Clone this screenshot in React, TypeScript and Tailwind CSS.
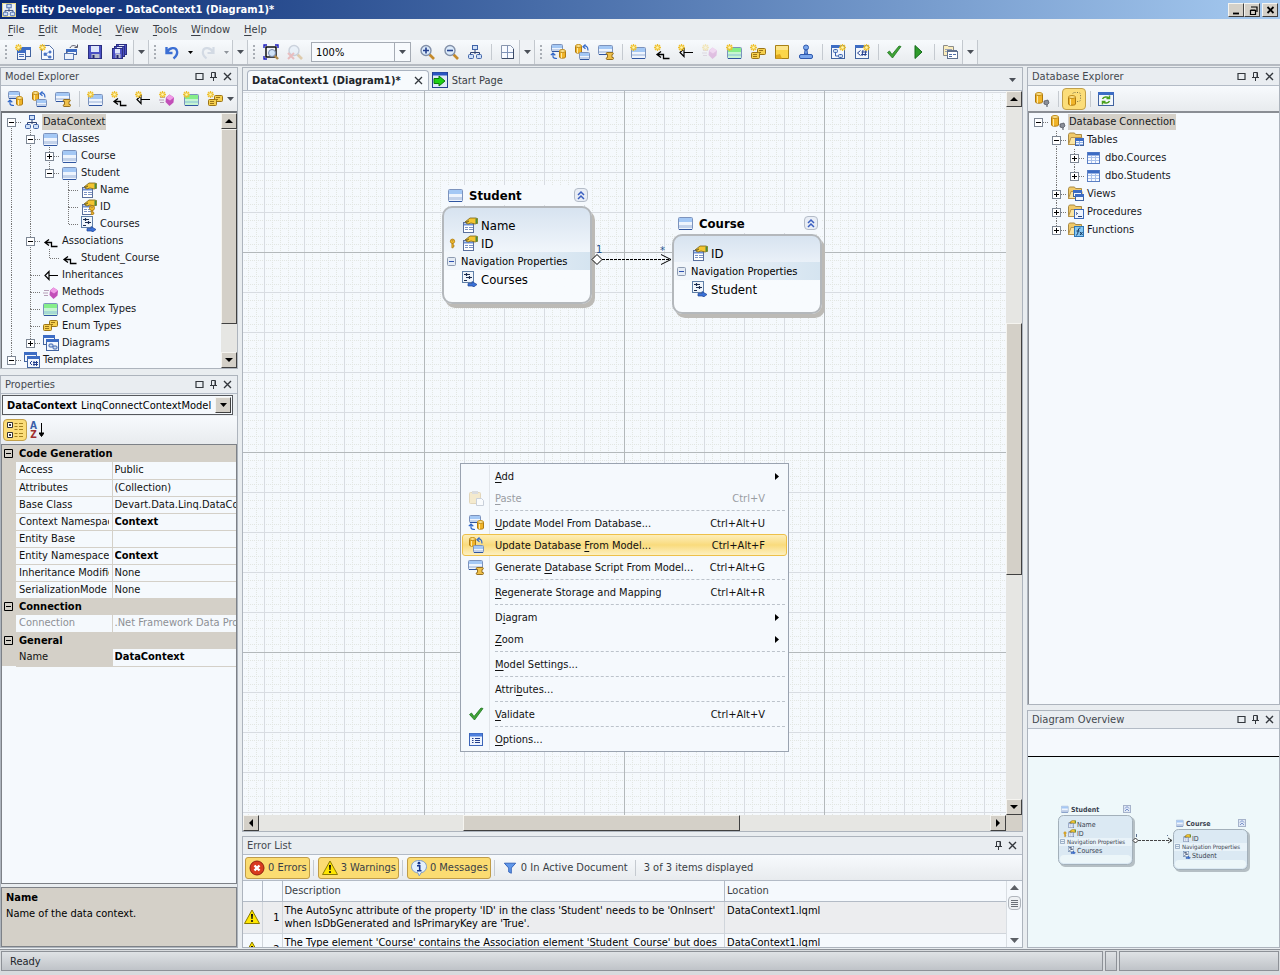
import React, { useState } from 'react';

const NAVY = '#24408e';

// ---------- icon parts ----------
const Tbl = ({ x, y, w, h, green }: { x: number; y: number; w: number; h: number; green?: boolean }) => (
  <g>
    <rect x={x + 0.5} y={y + 0.5} width={w - 1} height={h - 1} rx="1" fill={green ? '#c6f5d2' : '#eef4fd'} stroke="#7c93bd" />
    <rect x={x + 1} y={y + 1} width={w - 2} height={Math.round(h * 0.32)} fill={green ? '#86ee8a' : '#a4c8f5'} />
    <rect x={x + 1} y={y + Math.round(h * 0.6)} width={w - 2} height={Math.round(h * 0.2)} fill={green ? '#a5d9d4' : '#c3d2ea'} />
    <path d={`M${x + 1} ${y + h - 0.5}h${w - 2}`} stroke="#2f55a0" />
  </g>
);

const Db = ({ x, y, w = 7, h = 10 }: { x: number; y: number; w?: number; h?: number }) => (
  <g>
    <path
      d={`M${x + 0.5} ${y + 2}v${h - 4}c0 1.6 ${w - 1} 1.6 ${w - 1} 0v-${h - 4}`}
      fill="#f0b429"
      stroke="#b07a10"
    />
    <ellipse cx={x + w / 2} cy={y + 2} rx={w / 2 - 0.5} ry="1.5" fill="#fbe08a" stroke="#c28c17" />
    <path d={`M${x + 2.5} ${y + 4}v${h - 5}`} stroke="#fce9a6" />
  </g>
);

const Star = ({ x = 0, y = 0 }: { x?: number; y?: number }) => (
  <g fill="none">
    <path d={`M${x + 3.5} ${y}v7M${x} ${y + 3.5}h7M${x + 1} ${y + 1}l5 5M${x + 6} ${y + 1}l-5 5`} strokeWidth="1.3" stroke="#efc02c" />
    <circle cx={x + 3.5} cy={y + 3.5} r="1.3" fill="#fff6b0" />
  </g>
);

const Win = ({ x, y, w, h }: { x: number; y: number; w: number; h: number }) => (
  <g>
    <rect x={x + 0.5} y={y + 0.5} width={w - 1} height={h - 1} fill="#f3f7fd" stroke="#41639f" />
    <rect x={x} y={y} width={w} height="3" fill="#3c6cc4" />
  </g>
);

const Hand = (
  <g>
    <rect x="1.5" y="5.5" width="10" height="10" fill="#fff" stroke="#5a6f9c" />
    <path d="M2 7.5h9" stroke="#6a8fd8" strokeWidth="2" />
    <path d="M3 10.5h3M7 10.5h4M3 12.5h3M7 12.5h4" stroke="#7b93c4" />
    <path d="M3 5l5-4h6l2 1v4l-3 1-4-1-3 1-2-1 3-2z" fill="#f4c430" stroke="#7a6414" strokeWidth=".8" />
    <path d="M13.5 1.5h2v5h-2z" fill="#4d8b3c" />
  </g>
);

const Key = ({ x, y }: { x: number; y: number }) => (
  <g fill="#f5c02f" stroke="#a8730c" strokeWidth=".8">
    <circle cx={x + 3} cy={y + 3} r="2.5" />
    <path d={`M${x + 2.3} ${y + 5.5}v5h1.5v-1.5h1v-1.4h-1v-2z`} />
    <circle cx={x + 3} cy={y + 2.4} r=".6" fill="#fff" />
  </g>
);

const Lens = (
  <g>
    <path d="M10.5 10.5l4.5 4.5" stroke="#c58a2b" strokeWidth="2.6" />
    <circle cx="7" cy="6.5" r="5" fill="#dcebfb" stroke="#8290a8" strokeWidth="1.4" />
  </g>
);

const Folder = (
  <g>
    <path d="M.5 2.5l1-1.5h5l1 1.5h6v10H.5z" fill="#f0c969" stroke="#a98a45" />
    <path d="M.5 12.5l2.5-7h11v7z" fill="#fbe5a3" stroke="#b8934b" />
  </g>
);

const Tree = (
  <g>
    <path d="M8 6v4M3.500 11V8.500h9V11" fill="none" stroke="#2d4170" />
    <rect x="5.500" y="1.500" width="5" height="4" fill="#cfe0f8" stroke="#3f63a8" />
    <rect x="1.500" y="10.500" width="5" height="4" rx="1" fill="#cfe0f8" stroke="#3f63a8" />
    <rect x="9.500" y="10.500" width="5" height="4" rx="1" fill="#cfe0f8" stroke="#3f63a8" />
  </g>
);

const Enum = (
  <g fill="#f5cf4e" stroke="#9b7416">
    <rect x="7.500" y="4.500" width="8" height="6" rx="1" />
    <rect x="1.500" y="8.500" width="8" height="6" rx="1" />
    <path d="M9 6.500h4M9 8.500h2M3 10.500h4M3 12.500h4" />
  </g>
);

const Assoc = <path d="M2 9.500h6.500v4h6M6 6.500l-4 3 4 3" fill="none" stroke="#000" strokeWidth="1.3" />;
const Inherit = <path d="M6 8.500h9M6 4.500v8L2 8.500z" fill="none" stroke="#000" strokeWidth="1.2" />;
const Method = (
  <g>
    <path d="M1 6.500h5M0 9h5M1 11.500h4" stroke="#b79fb8" />
    <path d="M10.500 3.500l4.500 3-.5 5-4 3.500-4-4 .5-4.500z" fill="#c24fb8" />
    <path d="M10.500 3.500l4.500 3-4 3-4-2.500z" fill="#f09be6" />
  </g>
);

const Floppy = ({ x, y, s }: { x: number; y: number; s: number }) => (
  <g>
    <rect x={x + 0.5} y={y + 0.5} width={s - 1} height={s - 1} fill="#4a50c4" stroke="#2b2f80" />
    <rect x={x + 3} y={y + 1} width={s - 6} height={s / 2 - 1} fill="#dfe6fa" />
    <rect x={x + 3.5} y={y + s - 5} width={s - 6} height="4" fill="#b9bccb" />
    <rect x={x + 4.5} y={y + s - 4} width="2" height="3" fill="#23276f" />
  </g>
);

const Warning = (
  <g>
    <path d="M8 1L15.500 14.500H.500z" fill="#ffe600" stroke="#8a7a00" />
    <path d="M7 5h2l-.4 5H7.400z" fill="#111" />
    <circle cx="8" cy="12" r="1.100" fill="#111" />
  </g>
);

const Scroll = (
  <g fill="#efc04a" stroke="#8c6414" strokeWidth=".9">
    <path d="M9 8.500h5.500c1 0 1 2 0 2H14v3h1c1 0 .7 2-.4 2H9c-1 0-1-2 0-2h.5v-3H9c-1 0-1-2 0-2z" />
  </g>
);

const glyphs: Record<string, React.ReactNode> = {
  app: (
    <g>
      <rect x=".5" y=".5" width="15" height="15" fill="#e9f0fb" stroke="#f1dd82" />
      {Tree}
    </g>
  ),
  newProject: (<g><Win x={4} y={3} w={12} h={10} /><Win x={2} y={6} w={9} h={10} /><path d="M4 10.500h5M4 12.500h5" stroke="#4e72b8" /><Star /></g>),
  newFile: (<g><path d="M2.500 1.500h8l4 4v10h-12z" fill="#f8fbff" stroke="#5672a8" /><path d="M5 9h2.500v2.500H5zM10 7h2v2h-2zM9.500 12h2.500v2H9.500zM7.500 10l2-2M7.500 11l2 2" fill="#4a76c6" stroke="#4a76c6" strokeWidth=".7" /><Star /></g>),
  open: (<g><Win x={3} y={5} w={11} h={6} /><rect x="1.500" y="9.500" width="9" height="6" fill="#eef3fb" stroke="#5b7ab4" /><path d="M4 9V7.500M7 4c1-3 5-3 7-1M14.500.5v3h-3" fill="none" stroke="#556" /></g>),
  save: <Floppy x={1} y={1} s={14} />,
  saveAll: (<g><Floppy x={5} y={0} s={11} /><Floppy x={3} y={2} s={11} /><Floppy x={1} y={4} s={11} /></g>),
  undo: <path d="M2.500 3v6h6M3 8.500c2-5 9-6 10-1.500.8 3-1 5.500-3.500 7.500" fill="none" stroke="#3c6fd4" strokeWidth="2.400" />,
  redo: <path d="M13.500 3v6h-6M13 8.500c-2-5-9-6-10-1.500-.8 3 1 5.500 3.500 7.500" fill="none" stroke="#d3dae4" strokeWidth="2.200" />,
  zoomFit: (<g><path d="M1 4V1h3M12 1h3v3M1 12v3h3" fill="none" stroke="#1d1dc0" strokeWidth="1.400" /><rect x="3" y="3" width="10" height="10" fill="none" stroke="#000" strokeWidth="1.400" /><path d="M11 11l4 4" stroke="#b08a4a" strokeWidth="2.400" /><circle cx="9" cy="9" r="3.500" fill="#cfe3f7" stroke="#7a8db0" /></g>),
  zoomOff: (<g opacity=".35">{Lens}<path d="M1 9l6 6M7 9l-6 6" stroke="#e06060" strokeWidth="2" /></g>),
  zoomIn: (<g>{Lens}<path d="M4 6.500h6M7 3.500v6" stroke={NAVY} strokeWidth="1.600" /></g>),
  zoomOut: (<g>{Lens}<path d="M4 6.500h6" stroke={NAVY} strokeWidth="1.600" /></g>),
  layout: Tree,
  page: (<g><path d="M2.500 1.500h9l3 3v10h-12z" fill="#f7faff" stroke="#8795ad" /><path d="M8.500 2v12M3 8.500h11" stroke="#7f93b8" /><path d="M3 14.500h12M14.500 5v10" stroke="#3b4a66" /></g>),
  updateModel: (<g><Tbl x={1} y={0} w={12} h={8} /><Db x={9} y={5} /><path d="M3 9v3.500c0 1.500 2 2 4 2M.8 11.200L3 9l2.300 2.200" fill="none" stroke="#2f66c8" strokeWidth="1.200" /></g>),
  updateDb: (<g><Db x={1} y={0} /><Tbl x={5} y={8} w={11} h={8} /><path d="M9 2.500c3-1.500 5 0 5 4M11.500.5L9 2.700l2.500 2" fill="none" stroke="#2f66c8" strokeWidth="1.200" /></g>),
  script: (<g><Tbl x={0} y={1} w={15} h={10} />{Scroll}</g>),
  newClass: (<g><Tbl x={1} y={3} w={15} h={12} /><Star /></g>),
  cls: <Tbl x={0} y={2} w={15} h={13} />,
  complex: <Tbl x={0} y={2} w={15} h={13} green />,
  newComplex: (<g><Tbl x={1} y={3} w={15} h={12} green /><Star /></g>),
  assoc: Assoc,
  newAssoc: (<g><g transform="translate(1 1)">{Assoc}</g><Star /></g>),
  inherit: Inherit,
  newInherit: (<g>{Inherit}<Star /></g>),
  method: Method,
  newMethod: (<g>{Method}<Star /></g>),
  methodOff: (<g opacity=".3">{Method}<Star /></g>),
  enums: <g transform="translate(-1 -2)">{Enum}</g>,
  newEnum: (<g>{Enum}<Star /></g>),
  note: (<g><path d="M1.500 1.500h13v13h-13z" fill="#fbd64a" stroke="#a88016" /><path d="M2 2h12v4H2z" fill="#fce48a" /><path d="M2 11l4-1 2 4.500H2z" fill="#e0a81c" /></g>),
  stamp: (<g fill="#7ba7ec" stroke="#2f59ae"><circle cx="8" cy="3.500" r="2.500" /><path d="M7 6h2l.5 4h-3z" /><rect x="1.500" y="10.500" width="13" height="4" rx="1.500" /></g>),
  newDiagram: (<g><Win x={1} y={1} w={14} h={14} /><rect x="3.500" y="5.500" width="4" height="3" rx="1" fill="#cde" stroke="#3b62b0" /><rect x="8.500" y="10.500" width="4" height="3" rx="1" fill="#cde" stroke="#3b62b0" /><path d="M5.500 9v3h3" fill="none" stroke="#3b62b0" /><Star x={9} /></g>),
  newTemplate: (<g><Win x={1} y={1} w={14} h={14} /><path d="M6.500 6.500L3.500 9l3 2.500M9 6l-1 6M12 6l-1 6M7.500 8h5.500M7.200 10.500h5.500" fill="none" stroke={NAVY} /><Star x={9} /></g>),
  check: <path d="M1.500 8.500l2-1.500 2.500 3.500L13 2l2 .5L6.500 14z" fill="#3fa535" stroke="#1f7421" strokeWidth=".8" />,
  run: <path d="M5 1.500l7 6.500-7 6.500z" fill="#2e9b2b" stroke="#136b18" />,
  copyDoc: (<g><path d="M1.500 1.500h4l1 1h5v9h-10z" fill="#fbedbd" stroke="#8b8b88" /><path d="M3 5.500h7M3 7.500h7" stroke="#9aa3b5" /><rect x="5.500" y="7.500" width="10" height="7" fill="#fff" stroke="#60718f" /><path d="M7 10.500h3M11 10.500h3M7 12.500h3" stroke="#4f6ea8" /><path d="M5 6.500h10" stroke="#60718f" /></g>),
  prop: Hand,
  propKey: (<g>{Hand}<Key x={8} y={6} /></g>),
  key: <Key x={1} y={3} />,
  nav: (<g><rect x=".5" y=".5" width="11" height="11" fill="#f1f6fb" stroke="#5f7fa8" /><path d="M2 3.500h6M4 6.500h6M2 9.500h3M4.500 2v3M7.500 5v3" stroke="#1c2d50" strokeWidth="1.200" /><path d="M6 12.500h4v-2l5 3-4 3v-1.500H6z" fill="#3b72d8" stroke="#1f4596" strokeWidth=".7" /></g>),
  diagrams: (<g><Win x={0} y={0} w={12} h={10} /><Win x={3} y={4} w={13} h={12} /><rect x="6" y="9" width="4" height="3" rx="1" fill="#cde" stroke="#3b62b0" /><rect x="10" y="11" width="4" height="3" rx="1" fill="#cde" stroke="#3b62b0" /></g>),
  templates: (<g><Win x={0} y={0} w={13} h={10} /><Win x={3} y={4} w={13} h={12} /><path d="M8 9l-2 2 2 2M10 9v5M12.500 9v5M9 10.500h5M9 12.500h5" fill="none" stroke={NAVY} /></g>),
  dbConn: (<g><Db x={1} y={1} w={8} h={12} /><path d="M10 10l4-1 1 3-2 2-3-1z" fill="#8a8f99" stroke="#474c57" strokeWidth=".7" /><path d="M13 14v2" stroke="#474c57" /></g>),
  dbOff: (<g><rect x="6.500" y="1.500" width="8" height="9" rx="2" fill="none" stroke="#7d7348" strokeDasharray="1 1.500" /><Db x={2} y={4} w={8} h={11} /></g>),
  refresh: (<g><Win x={0} y={1} w={16} h={14} /><path d="M4.500 8c1-2.500 5-2.500 6-1M11.500 4.500v3h-3M11.500 10c-1 2.500-5 2.500-6 1M4.500 13.500v-3h3" fill="none" stroke="#4aa01d" strokeWidth="1.500" /></g>),
  folderTable: (<g>{Folder}<Win x={7} y={6} w={9} h={8} /><path d="M8 10.500h7M8 12.500h7M11.500 9v5" stroke="#8fb0e6" /></g>),
  folderView: (<g>{Folder}<Win x={5} y={4} w={9} h={7} /><Win x={7} y={8} w={9} h={7} /></g>),
  folderProc: (<g>{Folder}<rect x="6.500" y="5.500" width="9" height="9" fill="#eef4fd" stroke="#3a68b8" /><path d="M8 8.500l1.500 1L8 10.500M10 12.500h4" fill="none" stroke="#26437f" /></g>),
  folderFunc: (<g>{Folder}<rect x="6.500" y="4.500" width="9" height="10" fill="#86c7f2" stroke="#2d76b5" /><path d="M12.500 6c-2 0-2 1-2.500 4s-1 3-2 3M8.500 9h3M12 10l2.500 3M14.500 10L12 13" fill="none" stroke="#12365f" /></g>),
  table: (<g><rect x="1.500" y="2.500" width="12" height="11" fill="#f7faff" stroke="#5a7fc4" /><path d="M2 4h11" stroke="#3c6cc4" strokeWidth="3" /><path d="M2 7.500h11M2 10.500h11M5.500 6v7M9.500 6v7" stroke="#a9c1ea" /></g>),
  paste: (<g opacity=".4"><rect x="1.500" y="2.500" width="11" height="11" rx="1" fill="#f4d489" stroke="#c7a45a" /><rect x="4" y="1" width="6" height="3" fill="#b5b5b5" /><path d="M8.500 8.500h5l2 2v5h-7z" fill="#fff" stroke="#8a94a8" /></g>),
  options: (<g><rect x="1.500" y="2.500" width="13" height="12" fill="#eef4fe" stroke="#3b64b8" /><path d="M2 4h12" stroke="#4d7fdd" strokeWidth="3" /><path d="M4 7.500h1.500M4 9.500h1.500M4 11.500h1.500M7 7.500h5M7 9.500h5M7 11.500h5" stroke="#25408c" /></g>),
  start: (<g><rect x=".5" y=".5" width="15" height="15" fill="#dfe9f7" stroke="#24408e" /><path d="M1 2h14" stroke="#2a55c2" strokeWidth="3" /><path d="M2 6.500h5V4l6 5-6 5v-2.500H2z" fill="#1fd013" stroke="#0a7a0a" /></g>),
  error: (<g><circle cx="8" cy="8" r="7" fill="#d93a1f" stroke="#8f2010" /><path d="M5.500 5.500l5 5M10.500 5.500l-5 5" stroke="#fff" strokeWidth="2.400" /></g>),
  warning: Warning,
  info: (<g><path d="M8 .5c4.500 0 7.500 2.500 7.500 6.200 0 3.300-2.500 5.600-5.500 6.100L8.300 16 7 12.900C3.200 12.400.5 10.200.5 6.700.5 3 3.500.5 8 .5z" fill="#e3f0fd" stroke="#7f9cc4" /><circle cx="8" cy="3.200" r="1.400" fill="#16338c" /><path d="M6 5.700h2.700v5M6 10.700h4.500" fill="none" stroke="#16338c" strokeWidth="1.600" /></g>),
  filter: <path d="M1.500 2.500h13L9.500 8v6l-3-1.500V8z" fill="#5f97ea" stroke="#2b5bb5" />,
  category: (<g><path d="M.5.500h5v5h-5zM.5 10.500h5v5h-5z" fill="#fff" stroke="#333" /><path d="M2 3h2M3 2v2M2 13h2M3 12v2" stroke="#000" /><path d="M7.500 1.500h3M12 1.500h4M7.500 4.500h3M12 4.500h4M7.500 7.500h3M12 7.500h4M7.500 11.500h3M12 11.500h4M7.500 14.500h3M12 14.500h4" stroke="#a3811f" /></g>),
};

type IconProps = { name: string; x?: number; y?: number; size?: number; className?: string };

const Icon = ({ name, x, y, size = 16, className = 'shrink-0' }: IconProps) => (
  <svg x={x} y={y} width={size} height={size} viewBox="0 0 16 16" className={className} aria-hidden="true">
    {glyphs[name]}
  </svg>
);

const Caret = ({ color = '#4b5058' }: { color?: string }) => (
  <svg width="7" height="4" viewBox="0 0 7 4" aria-hidden="true"><path d="M0 0h7L3.500 4z" fill={color} /></svg>
);

// ---------- toolbar pieces ----------
const ToolButton = ({ name, active }: { name: string; active?: boolean }) => (
  <button
    type="button"
    aria-label={name}
    className={`flex h-[22px] w-6 shrink-0 items-center justify-center rounded-sm ${active ? 'border border-[#c2a049] bg-[#fbdd79]' : ''}`}
  >
    <Icon name={name} />
  </button>
);

const Sep = () => (
  <div className="flex w-2 shrink-0 justify-center">
    <div className="h-4 w-px bg-[#c5cad0]" />
  </div>
);

const Grip = () => (
  <div className="flex w-[11px] shrink-0 flex-col items-center gap-[2px]">
    {[0, 1, 2, 3].map((i) => (
      <div key={i} className="size-[2px] bg-[#a9aeb5]" />
    ))}
  </div>
);

const More = () => (
  <button type="button" aria-label="Toolbar options" className="flex h-6 w-4 shrink-0 items-center justify-center border-x border-[#c3c8ce] bg-[#eff2f5]">
    <Caret />
  </button>
);

const HeaderButtons = ({ max = true }: { max?: boolean }) => (
  <div className="mr-[3px] ml-auto flex">
    {max && (
      <button type="button" aria-label="Maximize" className="flex w-[14px] justify-center">
        <svg width="9" height="9" viewBox="0 0 9 9"><path d="M1 1.500h7v6H1z" fill="none" stroke="#33373d" strokeWidth="1.200" /></svg>
      </button>
    )}
    <button type="button" aria-label="Auto hide" className="flex w-[14px] justify-center">
      <svg width="9" height="9" viewBox="0 0 9 9"><path d="M2.500 5V.500h4V5M1 5.500h7M4.500 5.500V9" fill="none" stroke="#33373d" /><path d="M6 1v4" stroke="#33373d" /></svg>
    </button>
    <button type="button" aria-label="Close" className="flex w-[14px] justify-center">
      <svg width="9" height="9" viewBox="0 0 9 9"><path d="M1 1l7 7M8 1L1 8" stroke="#33373d" strokeWidth="1.400" /></svg>
    </button>
  </div>
);

const PanelHeader = ({ title, max }: { title: string; max?: boolean }) => (
  <div className="flex h-[18px] shrink-0 items-center border-b border-[#b3bbc6] bg-[#e9edf1] pl-1 text-[#44484f]">
    <h2>{title}</h2>
    <HeaderButtons max={max} />
  </div>
);

const bevel = 'border border-t-[#f5f4f0] border-l-[#f5f4f0] border-r-[#404040] border-b-[#404040] bg-[#d4d0c8]';

const arrowPaths: Record<string, string> = {
  up: 'M0 6h8L4 2z',
  down: 'M0 2h8L4 6z',
  left: 'M6 0v8L2 4z',
  right: 'M2 0v8l4-4z',
};

const ScrollArrow = ({ dir }: { dir: string }) => (
  <button type="button" aria-label={`Scroll ${dir}`} className={`flex size-4 shrink-0 items-center justify-center ${bevel}`}>
    <svg width="8" height="8" viewBox="0 0 8 8"><path d={arrowPaths[dir]} fill="#000" /></svg>
  </button>
);

// ---------- trees ----------
interface Node {
  label: string;
  icon: string;
  // one entry per column: '|' line, ' ' blank, 't' tee, 'l' corner, '+' / '-' expander
  cols: string;
  below?: boolean;
  selected?: boolean;
}

const modelTree: Node[] = [
  { label: 'DataContext', icon: 'layout', cols: '-', below: true, selected: true },
  { label: 'Classes', icon: 'cls', cols: '|-', below: true },
  { label: 'Course', icon: 'cls', cols: '||+', below: true },
  { label: 'Student', icon: 'cls', cols: '||-' },
  { label: 'Name', icon: 'prop', cols: '|| t' },
  { label: 'ID', icon: 'propKey', cols: '|| t' },
  { label: 'Courses', icon: 'nav', cols: '|| l' },
  { label: 'Associations', icon: 'assoc', cols: '|-', below: true },
  { label: 'Student_Course', icon: 'assoc', cols: '||l' },
  { label: 'Inheritances', icon: 'inherit', cols: '|t' },
  { label: 'Methods', icon: 'method', cols: '|t' },
  { label: 'Complex Types', icon: 'complex', cols: '|t' },
  { label: 'Enum Types', icon: 'enums', cols: '|t' },
  { label: 'Diagrams', icon: 'diagrams', cols: '|+' },
  { label: 'Templates', icon: 'templates', cols: '-' },
];

const dbTree: Node[] = [
  { label: 'Database Connection', icon: 'dbConn', cols: '-', selected: true },
  { label: 'Tables', icon: 'folderTable', cols: ' -', below: true },
  { label: 'dbo.Cources', icon: 'table', cols: ' |+', below: true },
  { label: 'dbo.Students', icon: 'table', cols: ' |+' },
  { label: 'Views', icon: 'folderView', cols: ' +', below: true },
  { label: 'Procedures', icon: 'folderProc', cols: ' +', below: true },
  { label: 'Functions', icon: 'folderFunc', cols: ' +' },
];

const Connector = ({ kind, below, first }: { kind: string; below?: boolean; first?: boolean }) => {
  const box = kind === '+' || kind === '-';
  const toBottom = kind === '|' || kind === 't' || below;
  return (
    <svg width="19" height="18" viewBox="0 0 19 18" className="-mr-px shrink-0" aria-hidden="true">
      <g stroke="#777" strokeDasharray="1 1" fill="none">
        {kind !== ' ' && !first && <path d="M9.500 0v9" />}
        {toBottom && kind !== ' ' && <path d="M9.500 9v9" />}
        {kind !== ' ' && kind !== '|' && <path d="M10 9.500h9" />}
      </g>
      {box && (
        <g>
          <rect x="5.500" y="5.500" width="8" height="8" fill="#fff" stroke="#7d8794" />
          <path d={kind === '+' ? 'M7 9.500h5M9.500 7v5' : 'M7 9.500h5'} stroke="#000" />
        </g>
      )}
    </svg>
  );
};

const TreeView = ({ nodes, tall }: { nodes: Node[]; tall?: boolean }) => (
  <ul className="min-w-0 flex-1 overflow-hidden">
    {nodes.map((n, row) => (
      <li key={n.label} className={`flex items-center overflow-hidden ${tall ? 'h-[18px]' : 'h-[17px]'}`}>
        {n.cols.split('').map((kind, i) => (
          <span key={i} className={tall ? '' : 'pr-px'}>
            <Connector kind={kind} below={n.below} first={row === 0} />
          </span>
        ))}
        <Icon name={n.icon} className="ml-[3px] shrink-0" />
        <span className={`ml-[2px] px-px leading-4 text-[#16181c] ${n.selected ? 'bg-[#d4d0c8]' : ''}`}>{n.label}</span>
      </li>
    ))}
  </ul>
);

// ---------- property grid ----------
const groups = [
  {
    name: 'Code Generation',
    rows: [
      ['Access', 'Public'],
      ['Attributes', '(Collection)'],
      ['Base Class', 'Devart.Data.Linq.DataContext'],
      ['Context Namespace', 'Context', 'bold'],
      ['Entity Base', ''],
      ['Entity Namespace', 'Context', 'bold'],
      ['Inheritance Modifier', 'None'],
      ['SerializationMode', 'None'],
    ],
  },
  { name: 'Connection', rows: [['Connection', '.Net Framework Data Provider', 'off']] },
  { name: 'General', rows: [['Name', 'DataContext', 'bold']] },
];

const PropertyGrid = () => (
  <table className="w-full table-fixed border-collapse">
    <colgroup>
      <col className="w-[14px]" />
      <col className="w-24" />
      <col />
    </colgroup>
    {groups.map((g) => (
      <tbody key={g.name}>
        <tr className="h-[17px] bg-[#d4d0c8]">
          <td className="pl-[2px]">
            <svg width="9" height="9" viewBox="0 0 9 9"><path d="M.5.500h8v8h-8zM2 4.500h5" fill="none" stroke="#000" /></svg>
          </td>
          <th colSpan={2} className="pl-[3px] text-left leading-4 font-bold text-black">{g.name}</th>
        </tr>
        {g.rows.map(([label, value, kind]) => (
          <tr key={label} className={`h-[17px] ${kind === 'off' ? 'text-[#8d9095]' : 'text-[#111]'}`}>
            <td className="bg-[#d4d0c8]" />
            <td className={`border-b border-[#d4d0c8] px-[3px] leading-4 ${label === 'Name' ? 'bg-[#d4d0c8]' : ''}`}>
              <div className="overflow-hidden whitespace-nowrap">{label}</div>
            </td>
            <td className={`border-b border-l border-[#d4d0c8] pl-[2px] leading-4 ${kind === 'bold' ? 'font-bold text-black' : ''}`}>
              <div className="overflow-hidden whitespace-nowrap">{value}</div>
            </td>
          </tr>
        ))}
      </tbody>
    ))}
  </table>
);

// ---------- diagram ----------
interface Member { label: string; icon: string; keyed?: boolean }

const EntityBox = ({ title, members, nav, className }: { title: string; members: Member[]; nav: string; className: string }) => (
  <div className={`absolute w-[150px] text-[13px] text-black ${className}`}>
    <div className="flex h-5 items-center bg-[#f5f9fd] pr-1 pl-[6px]">
      <Icon name="cls" />
      <span className="ml-[5px] font-bold">{title}</span>
      <button type="button" aria-label={`Collapse ${title}`} className="ml-auto rounded-sm border border-[#b4bcc8] bg-[#e8edf5]">
        <svg width="12" height="12" viewBox="0 0 12 12"><path d="M3 6l3-3 3 3M3 10l3-3 3 3" fill="none" stroke="#3b5fc0" strokeWidth="1.500" /></svg>
      </button>
    </div>
    <div className="mt-px rounded-[10px] border-2 border-[#b4b8bc] bg-linear-to-b from-[#d7e3f0] to-[#f8fbfe] to-60% pt-2 pb-[14px] shadow-[3px_4px_0_#bcbab6]">
      {members.map((m) => (
        <div key={m.label} className="flex h-[18px] items-center pl-[5px]">
          <span className="w-[13px]">{m.keyed && <Icon name="key" size={14} />}</span>
          <Icon name={m.icon} />
          <span className="ml-[3px]">{m.label}</span>
        </div>
      ))}
      <div className="flex h-[18px] items-center bg-linear-to-r from-[#f3f7fb] to-[#d5e4f0] pl-[3px] text-[11px]">
        <svg width="9" height="9" viewBox="0 0 9 9"><rect x=".5" y=".5" width="8" height="8" rx="1" fill="#e4ebf4" stroke="#8d9bb0" /><path d="M2 4.500h5" stroke="#2b50b0" /></svg>
        <span className="ml-[5px]">Navigation Properties</span>
      </div>
      <div className="flex h-[18px] items-center pl-[18px]">
        <Icon name="nav" />
        <span className="ml-[3px]">{nav}</span>
      </div>
    </div>
  </div>
);

const GridLines = () => (
  <svg className="absolute inset-0 size-full" aria-hidden="true">
    <defs>
      <pattern id="minor" width="8" height="8" patternUnits="userSpaceOnUse" x="21" y="1">
        <path d="M.5 0v8M0 .5h8" stroke="#e2e6e2" strokeDasharray="1 1" />
      </pattern>
      <pattern id="major" width="40" height="40" patternUnits="userSpaceOnUse" x="21" y="1">
        <path d="M.5 0v40M0 .5h40" stroke="#d8dce2" />
      </pattern>
      <pattern id="page" width="200" height="200" patternUnits="userSpaceOnUse" x="181" y="161">
        <path d="M.5 0v200M0 .5h200" stroke="#b3b8bb" />
      </pattern>
    </defs>
    <rect width="100%" height="100%" fill="url(#minor)" />
    <rect width="100%" height="100%" fill="url(#major)" />
    <rect width="100%" height="100%" fill="url(#page)" />
  </svg>
);

interface MenuEntry { text: string; key: string; icon?: string; shortcut?: string; sub?: boolean; off?: boolean; hot?: boolean }

const menuSections: MenuEntry[][] = [
  [
    { text: 'Add', key: 'A', sub: true },
    { text: 'Paste', key: 'P', icon: 'paste', shortcut: 'Ctrl+V', off: true },
  ],
  [
    { text: 'Update Model From Database...', key: 'U', icon: 'updateModel', shortcut: 'Ctrl+Alt+U' },
    { text: 'Update Database From Model...', key: 'F', icon: 'updateDb', shortcut: 'Ctrl+Alt+F', hot: true },
    { text: 'Generate Database Script From Model...', key: 'D', icon: 'script', shortcut: 'Ctrl+Alt+G' },
  ],
  [{ text: 'Regenerate Storage and Mapping', key: 'R', shortcut: 'Ctrl+Alt+R' }],
  [
    { text: 'Diagram', key: 'i', sub: true },
    { text: 'Zoom', key: 'Z', sub: true },
  ],
  [{ text: 'Model Settings...', key: 'M' }],
  [{ text: 'Attributes...', key: 'b' }],
  [{ text: 'Validate', key: 'V', icon: 'check', shortcut: 'Ctrl+Alt+V' }],
  [{ text: 'Options...', key: 'O', icon: 'options' }],
];

// text with its access key underlined
const Mnemonic = ({ text, char }: { text: string; char: string }) => {
  const at = text.indexOf(char);
  return (
    <span className="whitespace-nowrap">
      {text.slice(0, at)}
      <span className="underline underline-offset-2">{char}</span>
      {text.slice(at + 1)}
    </span>
  );
};

const ContextMenu = () => (
  <div className="absolute top-[372px] left-[217px] w-[329px] border border-[#9aa3b0] bg-[#f5f9fd] p-px text-[#111]">
    {menuSections.map((section, i) => (
      <div key={i}>
        {i > 0 && (
          <div className="ml-[27px] flex h-[3px] items-center border-l border-[#e1e5ea] pl-[5px]">
            <div className="mr-[2px] flex-1 border-t border-dashed border-[#bcc3cb]" />
          </div>
        )}
        {section.map((m) => (
          <button
            key={m.text}
            type="button"
            disabled={m.off}
            className={`flex h-[22px] w-full items-center rounded-[3px] border pl-[5px] text-left ${m.hot ? 'border-[#edc04a] bg-linear-to-b from-[#fdeeb9] via-[#f9db7c] to-[#fdf0c0]' : 'border-transparent'} ${m.off ? 'text-[#9a9da3]' : ''}`}
          >
            <span className={`mr-[5px] flex h-[22px] w-[22px] shrink-0 items-center border-r ${m.hot ? 'border-transparent' : 'border-[#e1e5ea]'}`}>
              {m.icon && <Icon name={m.icon} />}
            </span>
            <Mnemonic text={m.text} char={m.key} />
            <span className="mr-[21px] ml-auto">{m.shortcut}</span>
            {m.sub && <svg width="4" height="7" viewBox="0 0 4 7" className="mr-[7px]"><path d="M0 0v7l4-3.500z" fill="#000" /></svg>}
          </button>
        ))}
      </div>
    ))}
  </div>
);

const OverviewEntity = ({ x, y, title, members, nav }: { x: number; y: number; title: string; members: Member[]; nav: string }) => {
  const navY = y + 14 + members.length * 9;
  return (
    <g fill="#3a4350" fontSize="7">
      <Icon name="cls" x={x + 3} y={y - 10} size={8} />
      <text x={x + 13} y={y - 3} fontWeight="bold">{title}</text>
      <rect x={x + 65.5} y={y - 9.5} width="7" height="7" fill="#dfe8f5" stroke="#a6b3ca" />
      <path d={`M${x + 67} ${y - 6.5}l2-2 2 2M${x + 67} ${y - 4}l2-2 2 2`} fill="none" stroke="#5f7cc0" strokeWidth=".8" />
      <rect x={x + 2} y={y + 2} width="75" height={navY - y + 18} rx="5" fill="#b5bfc4" />
      <rect x={x + 0.5} y={y + 0.5} width="74" height={navY - y + 17} rx="5" fill="#dbe9f3" stroke="#a3b0ba" />
      <rect x={x + 1} y={navY - 9} width="73" height="8" fill="#e9f3f9" />
      <rect x={x + 2} y={navY + 8} width="71" height="8" rx="4" fill="#ecf6f9" />
      {members.map((m, i) => (
        <g key={m.label}>
          {m.keyed && <Icon name="key" x={x + 5} y={y + 6 + i * 9} size={8} />}
          <Icon name={m.icon} x={x + 10} y={y + 5 + i * 9} size={8} />
          <text x={x + 19} y={y + 12 + i * 9}>{m.label}</text>
        </g>
      ))}
      <path d={`M${x + 2.5} ${navY - 7.5}h4v4h-4zM${x + 3} ${navY - 5.5}h3`} fill="none" stroke="#7f95b5" strokeWidth=".7" />
      <text x={x + 9} y={navY - 3} fontSize="6">Navigation Properties</text>
      <Icon name="nav" x={x + 10} y={navY - 1} size={8} />
      <text x={x + 19} y={navY + 6}>{nav}</text>
    </g>
  );
};

const studentMembers: Member[] = [{ label: 'Name', icon: 'prop' }, { label: 'ID', icon: 'prop', keyed: true }];
const courseMembers: Member[] = [{ label: 'ID', icon: 'prop' }];

const messages = [
  { n: 1, text: "The AutoSync attribute of the property 'ID' in the class 'Student' needs to be 'OnInsert' when IsDbGenerated and IsPrimaryKey are 'True'." },
  { n: 2, text: "The Type element 'Course' contains the Association element 'Student_Course' but does not contain the matching key member." },
];

const menus = [['File', 'F'], ['Edit', 'E'], ['Model', 'l'], ['View', 'V'], ['Tools', 'T'], ['Window', 'W'], ['Help', 'H']];

const barBg = 'bg-linear-to-b from-[#f7fafd] to-[#e8ebee]';
const toggle = 'flex h-[22px] items-center gap-[3px] rounded-[3px] border border-[#c09c48] bg-[#fbdc72] pr-[2px] pl-[3px]';
const statusCell = 'border border-[#8d9197] bg-linear-to-b from-[#dfe2e5] to-[#bfc3c8]';

export default function App() {
  const [zoom, setZoom] = useState('100%');

  return (
    <div className="flex h-screen flex-col overflow-hidden bg-[#e9edf0] font-['DejaVu_Sans_Condensed','DejaVu_Sans',sans-serif] text-[11px] leading-[13px] text-[#2f3339]">
      {/* Title bar */}
      <header className="flex h-[19px] shrink-0 items-center bg-linear-to-r from-[#0a2a74] to-[#a6caf0] px-[2px] text-white">
        <Icon name="app" size={14} />
        <h1 className="ml-[5px] font-bold">Entity Developer - DataContext1 (Diagram1)*</h1>
        <div className="ml-auto flex">
          {['M3 9.500h6', 'M5 3h6v5M4.500 6.500h5v4h-5zM4.500 6h5', 'M3.500 3l6 6M9.500 3l-6 6'].map((d, i) => (
            <button key={d} type="button" aria-label={['Minimize', 'Restore', 'Close'][i]} className={`flex h-[14px] w-4 items-center justify-center ${bevel} ${i === 2 ? 'ml-[2px]' : ''}`}>
              <svg width="13" height="12" viewBox="0 0 13 12"><path d={d} fill="none" stroke="#000" strokeWidth={i === 1 ? 1.2 : 1.8} /></svg>
            </button>
          ))}
        </div>
      </header>

      {/* Menu */}
      <nav className="flex h-[21px] shrink-0 items-center px-px text-[#3a3e45]">
        {menus.map(([text, key]) => (
          <button key={text} type="button" className="px-[7px]"><Mnemonic text={text} char={key} /></button>
        ))}
      </nav>

      {/* Main toolbar */}
      <div className="flex h-[26px] shrink-0 items-center border-b-2 border-[#b5bac1]">
        <div className={`flex h-full items-center ${barBg}`}>
          <Grip />
          {['newProject', 'newFile', 'open', 'save', 'saveAll'].map((n) => <ToolButton key={n} name={n} />)}
          <span className="w-[2px]" />
          <More />
          <Grip />
          <ToolButton name="undo" />
          <button type="button" aria-label="Undo list" className="flex w-3 justify-center"><svg width="5" height="3" viewBox="0 0 5 3"><path d="M0 0h5L2.500 3z" fill="#000" /></svg></button>
          <ToolButton name="redo" />
          <button type="button" aria-label="Redo list" className="flex w-3 justify-center"><svg width="5" height="3" viewBox="0 0 5 3"><path d="M0 0h5L2.500 3z" fill="#8f949b" /></svg></button>
          <More />
          <Grip />
          <ToolButton name="zoomFit" />
          <ToolButton name="zoomOff" />
          <div className="relative mx-1 flex h-5 w-[100px] items-center border border-[#a5abb4] bg-[#f7fafd]">
            <select aria-label="Zoom" value={zoom} onChange={(e) => setZoom(e.target.value)} className="size-full appearance-none pl-1 text-black">
              <option>50%</option>
              <option>100%</option>
              <option>200%</option>
            </select>
            <span className="pointer-events-none absolute right-0 flex h-full w-4 items-center justify-center border-l border-[#a5abb4]"><Caret /></span>
          </div>
          <ToolButton name="zoomIn" />
          <ToolButton name="zoomOut" />
          <ToolButton name="layout" />
          <Sep />
          <ToolButton name="page" />
          <More />
          <Grip />
          {['updateModel', 'updateDb', 'script'].map((n) => <ToolButton key={n} name={n} />)}
          <Sep />
          {['newClass', 'newAssoc', 'newInherit', 'methodOff', 'newComplex', 'newEnum', 'note', 'stamp'].map((n) => <ToolButton key={n} name={n} />)}
          <Sep />
          <ToolButton name="newDiagram" />
          <ToolButton name="newTemplate" />
          <Sep />
          <ToolButton name="check" />
          <ToolButton name="run" />
          <Sep />
          <ToolButton name="copyDoc" />
          <More />
        </div>
      </div>

      <main className="flex min-h-0 flex-1 gap-1 pt-px">
        {/* Left column */}
        <div className="flex w-[238px] shrink-0 flex-col gap-[6px]">
          <section className="flex shrink-0 flex-col border border-[#adb4bd]">
            <PanelHeader title="Model Explorer" />
            <div className={`flex h-[25px] items-center pl-[2px] ${barBg}`}>
              {['updateModel', 'updateDb', 'script'].map((n) => <ToolButton key={n} name={n} />)}
              <Sep />
              {['newClass', 'newAssoc', 'newInherit', 'newMethod', 'newComplex', 'newEnum'].map((n) => <ToolButton key={n} name={n} />)}
              <Caret />
            </div>
            <div className="flex border-t-2 border-l border-[#6f7378] bg-[#f5f9fd]">
              <TreeView nodes={modelTree} />
              <div className="flex flex-col bg-[#e6e6e3]">
                <ScrollArrow dir="up" />
                <div className={`flex-194 ${bevel}`} />
                <div className="flex-28" />
                <ScrollArrow dir="down" />
              </div>
            </div>
          </section>

          <section className="flex min-h-0 flex-1 flex-col border border-[#adb4bd]">
            <PanelHeader title="Properties" />
            <div className="m-px mr-1 flex h-5 shrink-0 items-center border border-[#55585d] bg-[#f5f9fd] pr-px pl-1 text-black">
              <label htmlFor="component" className="font-bold">DataContext</label>
              <select id="component" className="ml-1 min-w-0 flex-1 appearance-none overflow-hidden">
                <option>LinqConnectContextModel</option>
              </select>
              <span className={`flex size-4 items-center justify-center ${bevel}`}><Caret color="#000" /></span>
            </div>
            <div className={`flex h-7 shrink-0 items-center pl-[2px] ${barBg}`}>
              <ToolButton name="category" active />
              <button type="button" aria-label="Sort" className="ml-[3px] flex w-5 items-center gap-[2px]">
                <span className="text-[10px] leading-[9px] font-bold"><span className="block text-[#3a5fa8]">A</span><span className="block text-[#a03030]">Z</span></span>
                <svg width="5" height="14" viewBox="0 0 5 14"><path d="M2.500 0v13M0 10l2.500 3.500L5 10z" stroke="#000" /></svg>
              </button>
            </div>
            <div className="min-h-0 flex-1 overflow-hidden border border-[#7d8187] bg-[#f5f9fd]">
              <PropertyGrid />
            </div>
            <div className="mt-[3px] h-[60px] shrink-0 border border-[#7d8187] bg-[#d4d0c8] px-1 pt-[3px] text-black">
              <p className="font-bold">Name</p>
              <p className="mt-[3px]">Name of the data context.</p>
            </div>
          </section>
        </div>

        {/* Document and error list */}
        <div className="flex min-w-0 flex-1 flex-col gap-1">
          <section className="flex min-h-0 flex-1 flex-col border border-[#adb4bd]">
            <div className="flex h-[23px] shrink-0 items-end border-b border-[#b3bbc6] pl-1">
              <button type="button" className="flex h-5 items-center rounded-t border border-b-0 border-[#aab3c0] bg-[#f7fafd] pr-[5px] pl-1 font-bold text-[#22252a]">
                <span>DataContext1 (Diagram1)*</span>
                <svg width="9" height="9" viewBox="0 0 9 9" className="ml-[13px]"><path d="M1 1l7 7M8 1L1 8" stroke="#33373d" strokeWidth="1.300" /></svg>
              </button>
              <button type="button" className="flex h-5 items-center gap-1 pl-[3px] text-[#3a3e45]">
                <Icon name="start" />
                <span>Start Page</span>
              </button>
              <button type="button" aria-label="Document list" className="mr-[6px] ml-auto flex h-5 items-center"><Caret /></button>
            </div>
            <div className="flex min-h-0 flex-1">
              <div className="relative min-w-0 flex-1 overflow-hidden bg-[#f5f9fd]">
                <GridLines />
                <EntityBox title="Student" members={studentMembers} nav="Courses" className="top-[94px] left-[199px]" />
                <EntityBox title="Course" members={courseMembers} nav="Student" className="top-[122px] left-[429px]" />
                <svg width="84" height="30" viewBox="0 0 84 30" className="absolute top-[152px] left-[348px]">
                  <path d="M1 16.500l5-5 5 5-5 5z" fill="#fff" stroke="#000" />
                  <path d="M11 16.500h69" stroke="#000" strokeDasharray="3 1" />
                  <path d="M70 11.500l10 5-10 5" fill="none" stroke="#000" />
                  <text x="5" y="10" fontSize="11" fill="#24508c">1</text>
                  <text x="69" y="11" fontSize="11" fill="#24508c">*</text>
                </svg>
                <ContextMenu />
              </div>
              <div className="flex flex-col bg-[#e6e6e3]">
                <ScrollArrow dir="up" />
                <div className="flex-216" />
                <div className={`flex-249 ${bevel}`} />
                <div className="flex-224" />
                <ScrollArrow dir="down" />
              </div>
            </div>
            <div className="flex shrink-0 bg-[#e6e6e3]">
              <ScrollArrow dir="left" />
              <div className="flex-204" />
              <div className={`flex-275 ${bevel}`} />
              <div className="flex-250" />
              <ScrollArrow dir="right" />
              <div className="size-4 bg-[#d4d0c8]" />
            </div>
          </section>

          <section className="shrink-0 border border-[#adb4bd]">
            <PanelHeader title="Error List" max={false} />
            <div className={`flex h-[26px] items-center border-b border-[#b3bbc6] pl-[2px] text-[#3a3e45] ${barBg}`}>
              <button type="button" className={toggle}><Icon name="error" /><span>0 Errors</span></button>
              <Sep />
              <button type="button" className={toggle}><Icon name="warning" /><span>3 Warnings</span></button>
              <Sep />
              <button type="button" className={toggle}><Icon name="info" /><span>0 Messages</span></button>
              <Sep />
              <button type="button" className="flex items-center gap-1 px-1"><Icon name="filter" size={14} /><span>0 In Active Document</span></button>
              <Sep />
              <span className="ml-1">3 of 3 items displayed</span>
            </div>
            <div className="flex h-[66px] bg-[#f5f9fd]">
              <div className="min-w-0 flex-1 overflow-hidden">
                <table className="w-full table-fixed border-collapse">
                  <colgroup>
                    <col className="w-[19px]" />
                    <col className="w-5" />
                    <col className="w-[58%]" />
                    <col />
                  </colgroup>
                  <thead>
                    <tr className="h-[20px] text-left text-[#3a3e45]">
                      <th className="border-r border-b border-[#b3bbc6]" />
                      <th className="border-r border-b border-[#b3bbc6]" />
                      <th className="border-r border-b border-[#b3bbc6] pl-[2px] font-normal">Description</th>
                      <th className="border-b border-[#b3bbc6] pl-[2px] font-normal">Location</th>
                    </tr>
                  </thead>
                  <tbody className="text-black">
                    {messages.map((m) => (
                      <tr key={m.n} className={`h-8 ${m.n % 2 ? 'bg-[#ecedef]' : ''}`}>
                        <td className="border-r border-b border-[#d0d5db] pl-px"><Icon name="warning" /></td>
                        <td className="border-r border-b border-[#d0d5db] pr-[2px] text-right">{m.n}</td>
                        <td className="border-r border-b border-[#d0d5db] py-[2px] pl-[2px] align-top">{m.text}</td>
                        <td className="border-b border-[#d0d5db] py-[2px] pl-[2px] align-top">DataContext1.lqml</td>
                      </tr>
                    ))}
                  </tbody>
                </table>
              </div>
              <div className="flex w-4 flex-col items-center border-l border-[#d9dee3] py-1">
                <svg width="9" height="5" viewBox="0 0 9 5"><path d="M0 5h9L4.500 0z" fill="#5c6066" /></svg>
                <div className="mt-[6px] flex h-[14px] w-[13px] flex-col items-center justify-center gap-px rounded-sm border border-[#b0b5bc] bg-[#eef1f4]">
                  {[0, 1, 2, 3].map((i) => <div key={i} className="h-px w-[7px] bg-[#6b7078]" />)}
                </div>
                <svg width="9" height="5" viewBox="0 0 9 5" className="mt-auto"><path d="M0 0h9L4.500 5z" fill="#5c6066" /></svg>
              </div>
            </div>
          </section>
        </div>

        {/* Right column */}
        <div className="flex w-[253px] shrink-0 flex-col gap-[5px]">
          <section className="flex min-h-0 flex-1 flex-col border border-[#adb4bd]">
            <PanelHeader title="Database Explorer" />
            <div className={`flex h-[25px] shrink-0 items-center pl-[2px] ${barBg}`}>
              <ToolButton name="dbConn" />
              <Sep />
              <ToolButton name="dbOff" active />
              <Sep />
              <ToolButton name="refresh" />
            </div>
            <div className="flex min-h-0 flex-1 border-t-2 border-l border-[#8a8e94] bg-[#f5f9fd]">
              <TreeView nodes={dbTree} tall />
            </div>
          </section>
          <section className="shrink-0 border border-[#adb4bd]">
            <PanelHeader title="Diagram Overview" />
            <div className="h-7 border-b border-black bg-[#f5f9fd]" />
            <svg className="h-[190px] w-full bg-[#eef8fa]" role="img" aria-label="Diagram overview">
              <OverviewEntity x={30} y={58} title="Student" members={studentMembers} nav="Courses" />
              <OverviewEntity x={145} y={72} title="Course" members={courseMembers} nav="Student" />
              <path d="M105 83.500l2.500-2.500 2.500 2.500-2.500 2.500z" fill="#fff" stroke="#333" />
              <path d="M110 83.500h34" fill="none" stroke="#444" strokeDasharray="3 1" />
              <path d="M140 81l4 2.500-4 2.500" fill="none" stroke="#444" />
              <path d="M108.500 77v3M139.500 78v1" stroke="#5a6f90" />
            </svg>
          </section>
        </div>
      </main>

      {/* Status bar */}
      <footer className="mt-px flex h-[26px] shrink-0 gap-[2px] border-t border-[#8d9299] bg-[#d8dbde] px-px pt-px pb-1 text-[#22252a]">
        <div className={`flex flex-1 items-center pl-2 ${statusCell}`}>Ready</div>
        <div className={`w-3 ${statusCell}`} />
        <div className={`w-40 ${statusCell}`} />
      </footer>
    </div>
  );
}
